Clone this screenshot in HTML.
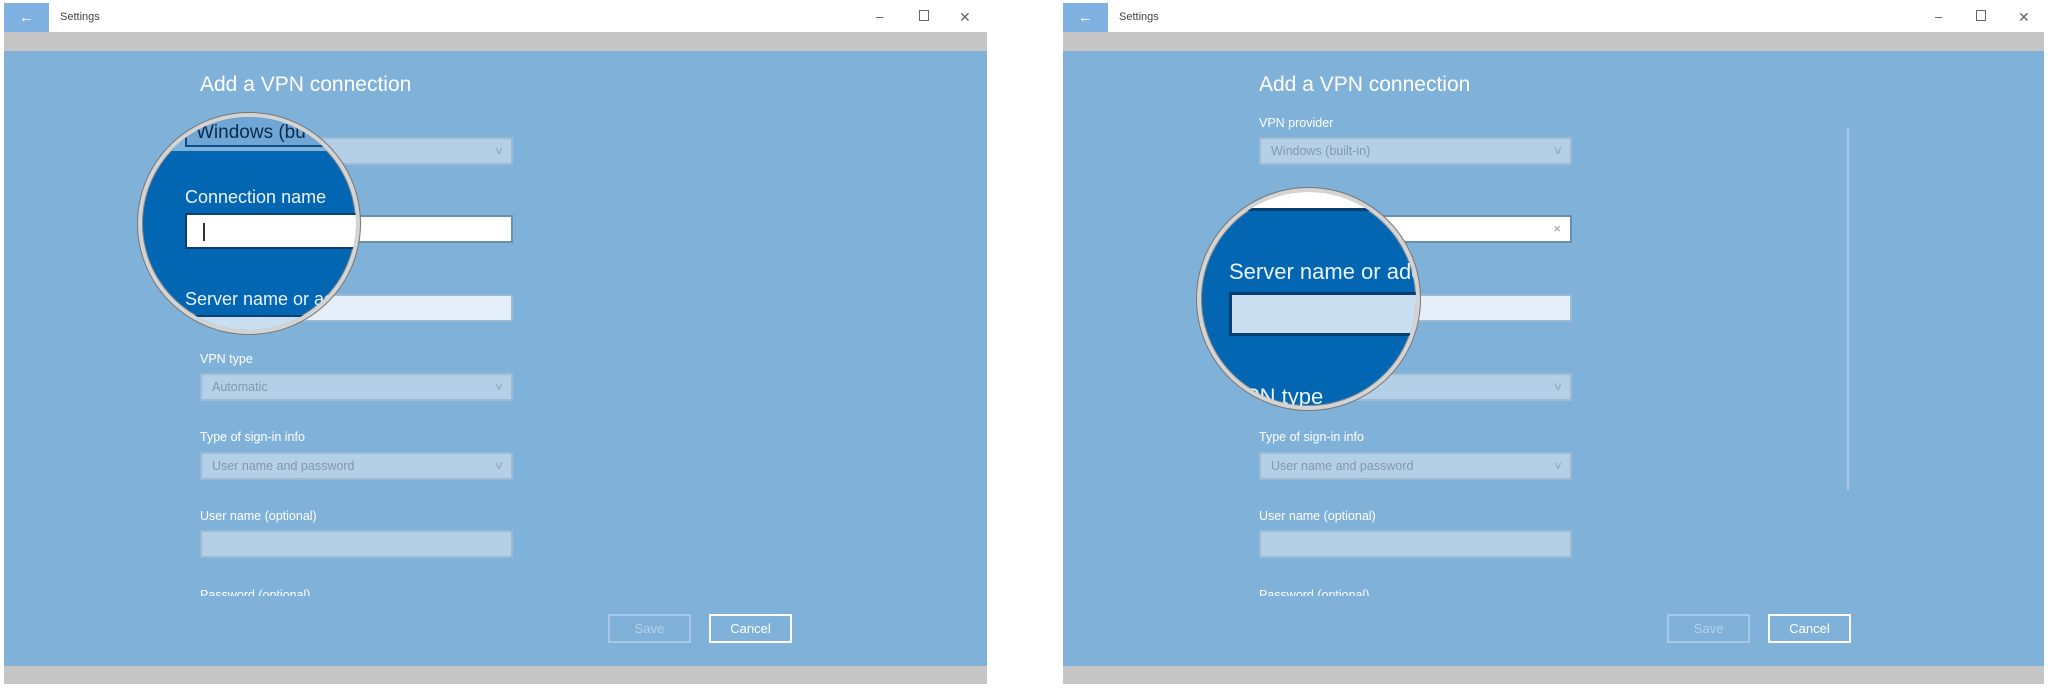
<!DOCTYPE html>
<html><head><meta charset="utf-8"><style>
*{margin:0;padding:0;box-sizing:border-box}
body{width:2048px;height:688px;background:#fff;position:relative;overflow:hidden;font-family:"Liberation Sans",sans-serif}
.a{position:absolute}
.win{position:absolute;top:3px;height:681px;background:#c6c6c6;overflow:hidden}
.tb{position:absolute;left:0;top:0;right:0;height:29px;background:#fff}
.back{position:absolute;left:0;top:0;width:45px;height:29px;background:#7fb2e0;color:#fff;font-size:15px;text-align:center;line-height:29px}
.ttl{position:absolute;left:56px;top:8px;font-size:11px;color:#444}
.ctl{position:absolute;top:6px;font-size:13px;color:#555}
.blue{position:absolute;left:0;right:0;top:48px;height:615px;background:#80b1d8;overflow:hidden}
.lbl{position:absolute;color:#fff;font-size:12.5px}
.box{position:absolute;width:313px;height:28px;background:#b4d0e7;border:2px solid #9bbad6;color:#8397ab;font-size:12.5px;padding:5px 10px}
.chev{position:absolute;right:8px;top:5px;color:#9ab;font-size:11px;transform:scaleX(1.3)}
.h1{position:absolute;color:#fff;font-size:21px}
.btn{position:absolute;width:83px;height:29px;border:2px solid;font-size:13px;text-align:center;line-height:25px}
.circ{position:absolute;border-radius:50%;overflow:hidden;background:#0366b3;border:4px solid #d4d4d4;box-shadow:0 0 0 1px #777,inset 0 0 0 1px #888}
</style></head><body>

<!-- LEFT WINDOW -->
<div class="win" style="left:4px;width:983px">
 <div class="tb"><div class="back">&#8592;</div><div class="ttl">Settings</div>
 <div class="ctl" style="left:872px">&#8211;</div><div class="ctl" style="left:915px;top:7px;width:10px;height:11px;border:1px solid #666"></div><div class="ctl" style="left:955px;top:6px;font-size:14px;color:#666">&#10005;</div></div>
 <div class="blue">
  <div class="h1" style="left:196px;top:22px">Add a VPN connection</div>
  <div class="box" style="left:196px;top:86px"><span class="chev">&#8744;</span></div>
  <div class="box" style="left:196px;top:164px;background:#fff;border-color:#6a8fae"></div>
  <div class="box" style="left:196px;top:243px;background:#e3eef8"></div>
  <div class="lbl" style="left:196px;top:301px">VPN type</div>
  <div class="box" style="left:196px;top:322px">Automatic<span class="chev">&#8744;</span></div>
  <div class="lbl" style="left:196px;top:379px">Type of sign-in info</div>
  <div class="box" style="left:196px;top:401px">User name and password<span class="chev">&#8744;</span></div>
  <div class="lbl" style="left:196px;top:458px">User name (optional)</div>
  <div class="box" style="left:196px;top:479px"></div>
  <div class="lbl" style="left:196px;top:537px;height:8px;overflow:hidden">Password (optional)</div>
  <div class="btn" style="left:604px;top:563px;border-color:#a6c8e6;color:#b5d1ea">Save</div>
  <div class="btn" style="left:705px;top:563px;border-color:#fff;color:#fff">Cancel</div>
 </div>
</div>

<!-- RIGHT WINDOW -->
<div class="win" style="left:1063px;width:981px">
 <div class="tb"><div class="back">&#8592;</div><div class="ttl">Settings</div>
 <div class="ctl" style="left:872px">&#8211;</div><div class="ctl" style="left:913px;top:7px;width:10px;height:11px;border:1px solid #666"></div><div class="ctl" style="left:955px;top:6px;font-size:14px;color:#666">&#10005;</div></div>
 <div class="blue">
  <div class="h1" style="left:196px;top:22px">Add a VPN connection</div>
  <div class="lbl" style="left:196px;top:65px">VPN provider</div>
  <div class="box" style="left:196px;top:86px">Windows (built-in)<span class="chev">&#8744;</span></div>
  <div class="box" style="left:196px;top:164px;background:#fff;border-color:#6a8fae"><span class="a" style="right:9px;top:4px;color:#999;font-size:13px">&#215;</span></div>
  <div class="box" style="left:196px;top:243px;background:#e3eef8"></div>
  <div class="box" style="left:196px;top:322px"><span class="chev">&#8744;</span></div>
  <div class="lbl" style="left:196px;top:379px">Type of sign-in info</div>
  <div class="box" style="left:196px;top:401px">User name and password<span class="chev">&#8744;</span></div>
  <div class="lbl" style="left:196px;top:458px">User name (optional)</div>
  <div class="box" style="left:196px;top:479px"></div>
  <div class="lbl" style="left:196px;top:537px;height:8px;overflow:hidden">Password (optional)</div>
  <div class="a" style="left:784px;top:77px;width:2px;height:362px;background:#a9c9e4"></div>
  <div class="btn" style="left:604px;top:563px;border-color:#a6c8e6;color:#b5d1ea">Save</div>
  <div class="btn" style="left:705px;top:563px;border-color:#fff;color:#fff">Cancel</div>
 </div>
</div>

<!-- LEFT MAGNIFIER -->
<div class="circ" style="left:138px;top:113px;width:222px;height:221px">
 <div class="a" style="left:0;top:0;width:222px;height:34px;background:#80b1d8"></div>
 <div class="a" style="left:43px;top:-8px;width:200px;height:38px;background:#6fa6d6;border:2px solid #0b4f8a"></div>
 <div class="a" style="left:58px;top:-12px;font-size:16px;color:#fff">V</div>
 <div class="a" style="left:54px;top:5px;font-size:19px;color:#0a2a4a">Windows (bu</div>
 <div class="a" style="left:43px;top:70px;font-size:18px;color:#e9f3fb">Connection name</div>
 <div class="a" style="left:43px;top:96px;width:200px;height:36px;background:#fff;border:2px solid #0b3f70"></div>
 <div class="a" style="left:61px;top:106px;width:2px;height:18px;background:#333"></div>
 <div class="a" style="left:43px;top:172px;font-size:18px;color:#e9f3fb;white-space:nowrap">Server name or ad</div>
 <div class="a" style="left:43px;top:198px;width:200px;height:30px;background:#c9dff0;border-top:2px solid #0b3f70"></div>
</div>

<!-- RIGHT MAGNIFIER -->
<div class="circ" style="left:1197px;top:188px;width:223px;height:222px">
 <div class="a" style="left:0;top:0;width:223px;height:16px;background:#fff"></div>
 <div class="a" style="left:0;top:16px;width:223px;height:3px;background:#0b3f70"></div>
 <div class="a" style="left:28px;top:67px;font-size:22px;color:#e9f3fb;white-space:nowrap">Server name or add</div>
 <div class="a" style="left:28px;top:100px;width:210px;height:44px;background:#c9dff0;border:3px solid #0b3f70"></div>
 <div class="a" style="left:44px;top:192px;font-size:22px;color:#e9f3fb;white-space:nowrap">PN type</div>
</div>

</body></html>
